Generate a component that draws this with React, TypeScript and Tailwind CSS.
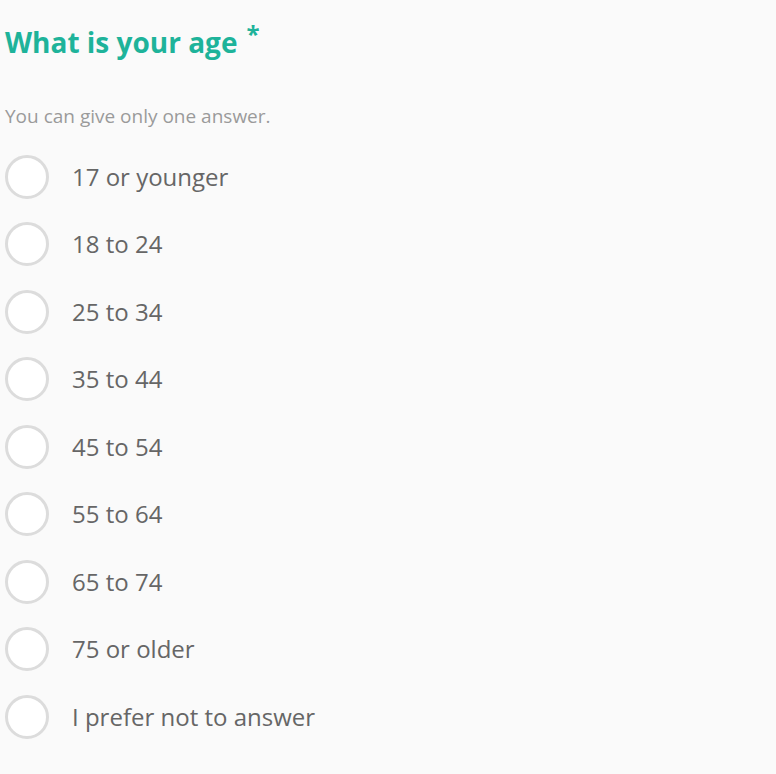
import React from 'react';

const options = [
  '17 or younger',
  '18 to 24',
  '25 to 34',
  '35 to 44',
  '45 to 54',
  '55 to 64',
  '65 to 74',
  '75 or older',
  'I prefer not to answer',
];

export default function App() {
  return (
    <div className="min-h-screen bg-[#fafafa] pl-[5px] pt-[24px] font-['Open_Sans',sans-serif]">
      <h1 className="flex items-start text-[28px] font-bold leading-[36px] text-[#1eb39a]">
        What is your age
        <span className="ml-[9px] -mt-[8px] text-[24px]">*</span>
      </h1>
      <p className="mt-[44px] text-[19px] leading-[24px] text-[#9a9a9a]">You can give only one answer.</p>
      <div className="mt-[15px] flex flex-col">
        {options.map((o) => (
          <label key={o} className="flex h-[67.5px] items-center gap-[23px] cursor-pointer">
            <span className="h-[44px] w-[44px] shrink-0 rounded-full border-[3px] border-[#dcdcdc] bg-white" />
            <span className="text-[24px] text-[#666]">{o}</span>
          </label>
        ))}
      </div>
    </div>
  );
}
